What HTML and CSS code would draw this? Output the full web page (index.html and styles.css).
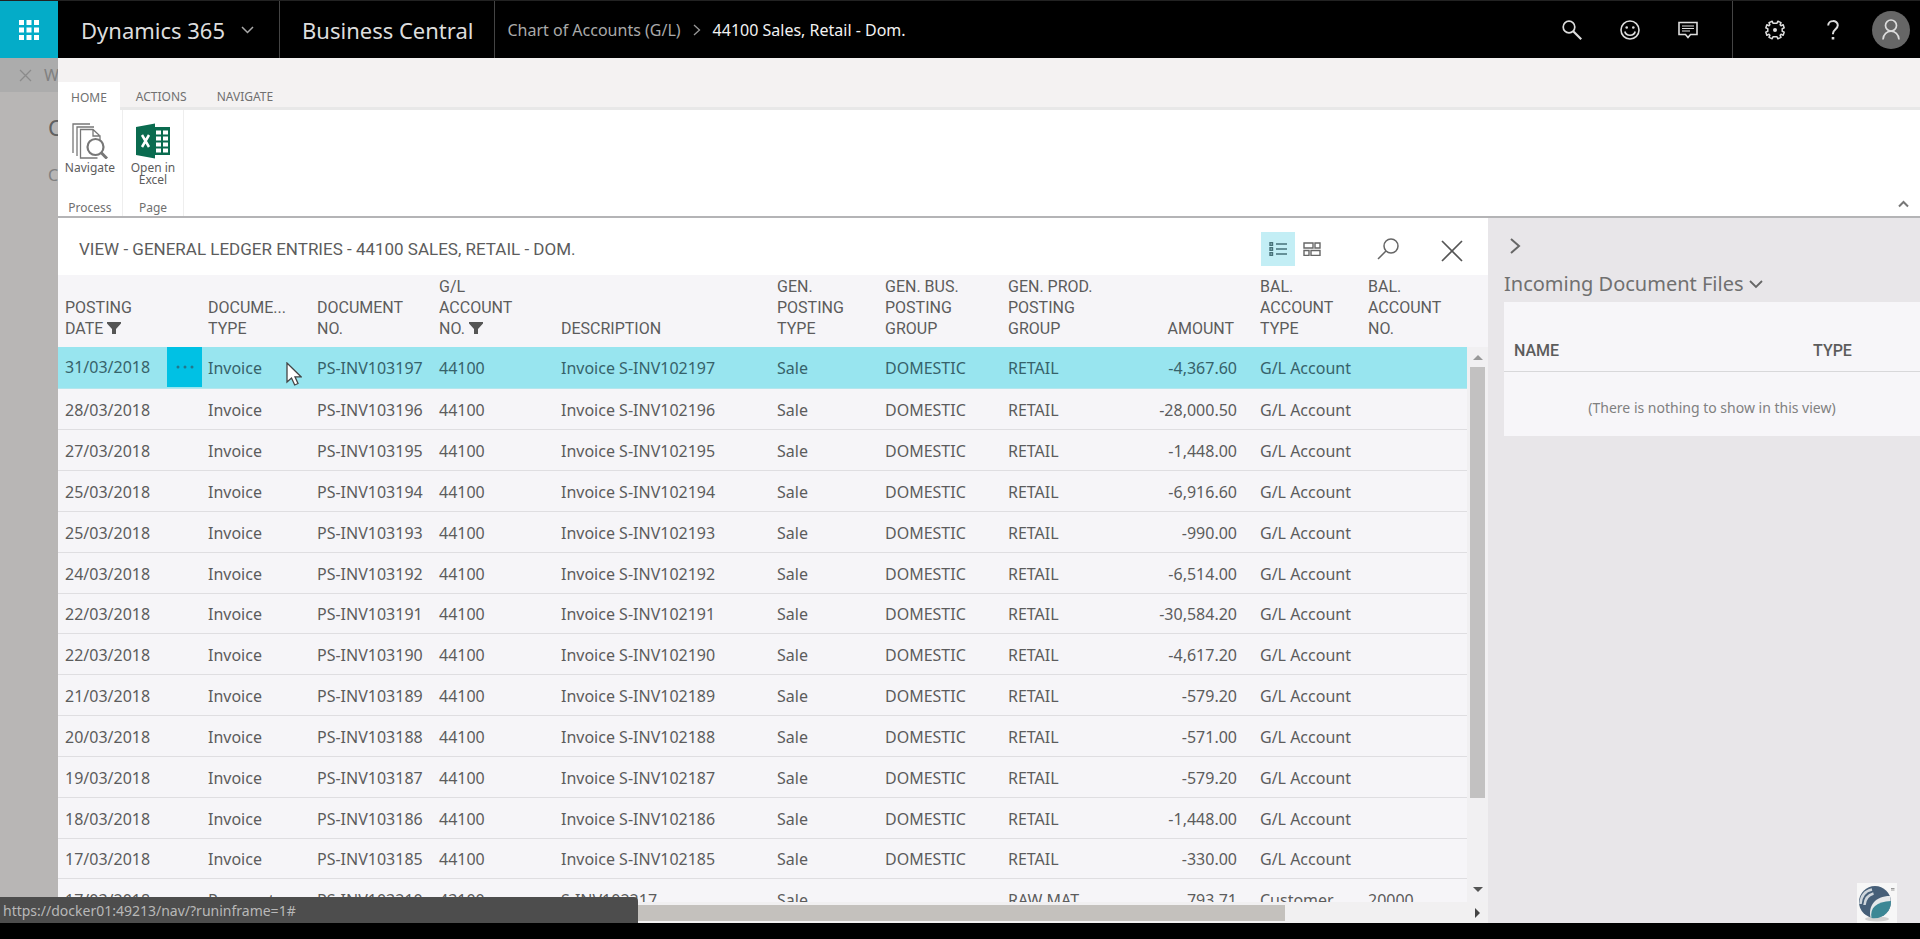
FILE: index.html
```html
<!DOCTYPE html>
<html lang="en">
<head>
<meta charset="utf-8">
<title>General Ledger Entries - Dynamics 365 Business Central</title>
<link rel="stylesheet" href="styles.css">
</head>
<body>
<header class="topbar">
  <button class="launcher" aria-label="App launcher">
    <svg width="20" height="20" viewBox="0 0 20 20" fill="#fff"><path d="M0 0h5v5H0zM7.500 0h5v5h-5zM15 0h5v5h-5zM0 7.500h5v5H0zM7.500 7.500h5v5h-5zM15 7.500h5v5h-5zM0 15h5v5H0zM7.500 15h5v5h-5zM15 15h5v5h-5z"/></svg>
  </button>
  <button class="suite">Dynamics 365
    <svg width="13" height="8" viewBox="0 0 13 8" fill="none" stroke="#aaa" stroke-width="1.500"><path d="M1 1l5.500 5.500L12 1"/></svg>
  </button>
  <a class="product" href="#">Business Central</a>
  <nav class="crumbs">
    <a href="#">Chart of Accounts (G/L)</a>
    <svg width="8" height="12" viewBox="0 0 8 12" fill="none" stroke="#999" stroke-width="1.300"><path d="M1 1l5.500 5L1 11"/></svg>
    <span class="current">44100 Sales, Retail - Dom.</span>
  </nav>
  <div class="tools">
    <button aria-label="Search"><svg width="20" height="20" viewBox="0 0 20 20" fill="none" stroke="#ddd" stroke-width="1.700"><circle cx="7" cy="7" r="5.800"/><path d="M11.200 11.200l8 8" stroke-width="2.200"/></svg></button>
    <button aria-label="Feedback"><svg width="20" height="20" viewBox="0 0 20 20" fill="none" stroke="#ddd" stroke-width="1.600"><circle cx="10" cy="10" r="9"/><path d="M4.800 11.500c1.200 5 9.200 5 10.400 0"/><circle cx="6.700" cy="7.500" r="1.300" fill="#ddd" stroke="none"/><circle cx="13.300" cy="7.500" r="1.300" fill="#ddd" stroke="none"/></svg></button>
    <button aria-label="Messages"><svg width="20" height="18" viewBox="0 0 20 18" fill="none" stroke="#ddd" stroke-width="1.600"><path d="M1 1.500h18v12h-6.500L10 16.500 7.500 13.500H1z"/><path d="M4 5h12M4 7.500h12M4 10h8" stroke-width="1.200"/></svg></button>
  </div>
  <div class="account">
    <button aria-label="Settings"><svg width="20" height="20" viewBox="0 0 20 20" fill="none" stroke="#ddd" stroke-width="1.500" stroke-linejoin="round"><path d="M8 3.300L7.200 1.200 4 2.600l.9 2.200-.9.900-2.200-.9-1 3.100 2 .9v2.400l-2 .9 1 3.100 2.200-.9.900.9-.9 2.200 3.200 1.400.8-2.100h4l.8 2.100 3.200-1.400-.9-2.200.9-.9 2.200.9 1-3.100-2-.9V8.800l2-.9-1-3.100-2.200.9-.9-.9.900-2.200-3.200-1.400L12 3.300z"/><circle cx="10" cy="10" r="2" fill="#ddd" stroke="none"/></svg></button>
    <button aria-label="Help"><svg width="12" height="20" viewBox="0 0 12 20" fill="none" stroke="#ddd" stroke-width="2"><path d="M1.200 5.500C1.200-.3 10.800-.3 10.800 5.300c0 3.700-4.800 4.200-4.800 8.200v.8"/><path d="M6 17v2.500" stroke-width="2.600"/></svg></button>
    <button aria-label="Account"><svg width="38" height="38" viewBox="0 0 38 38" fill="none" stroke="#ddd" stroke-width="1.700"><circle cx="19" cy="19" r="19" fill="#666" stroke="none"/><circle cx="19" cy="14.500" r="5.500"/><path d="M11 28.500c.5-11 15.500-11 16 0"/></svg></button>
  </div>
</header>

<div class="workspace">
  <aside class="underlay" aria-hidden="true">
    <div class="underlay-bar">
      <svg width="13" height="13" viewBox="0 0 13 13" stroke="#8b8b8b" stroke-width="1.300"><path d="M1 1l11 11M12 1L1 12"/></svg>
      <span>W</span>
    </div>
    <p class="underlay-title">C</p>
    <p class="underlay-sub">C</p>
  </aside>

  <main class="page">
    <nav class="tabs">
      <button class="tab active">HOME</button>
      <button class="tab">ACTIONS</button>
      <button class="tab">NAVIGATE</button>
    </nav>
    <section class="ribbon">
      <div class="group process">
        <button class="command">
          <svg width="36" height="36" viewBox="0 0 36 36" fill="none" stroke="#777" stroke-width="1.300"><path d="M18 1H1v29M22 4H5v29M27 13V12l-6-5.500H8.500v28.500h17M21 6.500V13h7V20"/><circle cx="23.500" cy="24" r="8" fill="#fff" stroke-width="2.200"/><path d="M29 29.500l6 6" stroke-width="3"/></svg>
          <span>Navigate</span>
        </button>
        <span class="group-name">Process</span>
      </div>
      <div class="group">
        <button class="command">
          <svg width="36" height="36" viewBox="0 0 36 36" fill="none"><path d="M18 4h17v28H18z" fill="#0a6b4f"/><path d="M21 7.500h5v4h-5zM28 7.500h5v4h-5zM21 13.500h5v4h-5zM28 13.500h5v4h-5zM21 19.500h5v4h-5zM28 19.500h5v4h-5zM21 25.500h5v4h-5zM28 25.500h5v4h-5z" fill="#fff"/><path d="M1 4L20 .5v35L1 32z" fill="#0a6b4f"/><path d="M7 12l7 12M14 12L7 24" stroke="#fff" stroke-width="2.500"/></svg>
          <span>Open in<br>Excel</span>
        </button>
        <span class="group-name">Page</span>
      </div>
      <button class="collapse" aria-label="Collapse ribbon"><svg width="11" height="8" viewBox="0 0 11 8" fill="none" stroke="#777" stroke-width="2"><path d="M1 6.500L5.500 2 10 6.500"/></svg></button>
    </section>

    <div class="content">
      <section class="list">
        <div class="list-head">
          <h1>VIEW - GENERAL LEDGER ENTRIES - 44100 SALES, RETAIL - DOM.</h1>
          <button class="view on" aria-label="List view"><svg width="18" height="14" viewBox="0 0 18 14" fill="none" stroke="#477279" stroke-width="1.400"><path d="M7 2h11M7 7h11M7 12h11"/><path d="M1 .8h2.500v2.500H1zM1 5.800h2.500v2.500H1zM1 10.800h2.500v2.500H1z"/></svg></button>
          <button class="view" aria-label="Tile view"><svg width="18" height="14" viewBox="0 0 18 14" fill="none" stroke="#666" stroke-width="1.400"><path d="M1 1h9v5H1zM12 1h5v5h-5zM1 8.500h5v5H1zM8 8.500h9v5H8z"/></svg></button>
          <button class="find" aria-label="Find"><svg width="22" height="22" viewBox="0 0 22 22" fill="none" stroke="#666" stroke-width="1.500"><circle cx="14" cy="8" r="7"/><path d="M9 13l-8 8"/></svg></button>
          <button class="close" aria-label="Close"><svg width="22" height="22" viewBox="0 0 22 22" stroke="#555" stroke-width="1.700"><path d="M1 1l20 20M21 1L1 21"/></svg></button>
        </div>
        <div class="grid">
          <div class="rows">
            <table>
              <colgroup><col class="c-date"><col class="c-type"><col class="c-no"><col class="c-no"><col class="c-desc"><col class="c-small"><col class="c-group"><col class="c-group"><col class="c-amount"><col class="c-small"><col class="c-last"></colgroup>
              <thead><tr>
                <th>POSTING<br>DATE<svg class="funnel" width="14" height="12" viewBox="0 0 14 12" fill="#555"><path d="M0 0h14v1.500L9 7v5H5V7L0 1.500z"/></svg></th>
                <th>DOCUME...<br>TYPE</th><th>DOCUMENT<br>NO.</th>
                <th>G/L<br>ACCOUNT<br>NO.<svg class="funnel" width="14" height="12" viewBox="0 0 14 12" fill="#555"><path d="M0 0h14v1.500L9 7v5H5V7L0 1.500z"/></svg></th>
                <th>DESCRIPTION</th><th>GEN.<br>POSTING<br>TYPE</th><th>GEN. BUS.<br>POSTING<br>GROUP</th><th>GEN. PROD.<br>POSTING<br>GROUP</th><th class="num">AMOUNT</th><th>BAL.<br>ACCOUNT<br>TYPE</th><th>BAL.<br>ACCOUNT<br>NO.</th>
              </tr></thead>
              <tbody>
                <tr class="selected"><td><div class="with-menu">31/03/2018<button class="more" aria-label="Row actions"><svg width="20" height="4" viewBox="0 0 20 4" fill="#21778c"><circle cx="3" cy="2" r="1.500"/><circle cx="10" cy="2" r="1.500"/><circle cx="17" cy="2" r="1.500"/></svg></button></div></td><td>Invoice</td><td>PS-INV103197</td><td>44100</td><td>Invoice S-INV102197</td><td>Sale</td><td>DOMESTIC</td><td>RETAIL</td><td class="num">-4,367.60</td><td>G/L Account</td><td></td></tr>
                <tr><td>28/03/2018</td><td>Invoice</td><td>PS-INV103196</td><td>44100</td><td>Invoice S-INV102196</td><td>Sale</td><td>DOMESTIC</td><td>RETAIL</td><td class="num">-28,000.50</td><td>G/L Account</td><td></td></tr>
                <tr><td>27/03/2018</td><td>Invoice</td><td>PS-INV103195</td><td>44100</td><td>Invoice S-INV102195</td><td>Sale</td><td>DOMESTIC</td><td>RETAIL</td><td class="num">-1,448.00</td><td>G/L Account</td><td></td></tr>
                <tr><td>25/03/2018</td><td>Invoice</td><td>PS-INV103194</td><td>44100</td><td>Invoice S-INV102194</td><td>Sale</td><td>DOMESTIC</td><td>RETAIL</td><td class="num">-6,916.60</td><td>G/L Account</td><td></td></tr>
                <tr><td>25/03/2018</td><td>Invoice</td><td>PS-INV103193</td><td>44100</td><td>Invoice S-INV102193</td><td>Sale</td><td>DOMESTIC</td><td>RETAIL</td><td class="num">-990.00</td><td>G/L Account</td><td></td></tr>
                <tr><td>24/03/2018</td><td>Invoice</td><td>PS-INV103192</td><td>44100</td><td>Invoice S-INV102192</td><td>Sale</td><td>DOMESTIC</td><td>RETAIL</td><td class="num">-6,514.00</td><td>G/L Account</td><td></td></tr>
                <tr><td>22/03/2018</td><td>Invoice</td><td>PS-INV103191</td><td>44100</td><td>Invoice S-INV102191</td><td>Sale</td><td>DOMESTIC</td><td>RETAIL</td><td class="num">-30,584.20</td><td>G/L Account</td><td></td></tr>
                <tr><td>22/03/2018</td><td>Invoice</td><td>PS-INV103190</td><td>44100</td><td>Invoice S-INV102190</td><td>Sale</td><td>DOMESTIC</td><td>RETAIL</td><td class="num">-4,617.20</td><td>G/L Account</td><td></td></tr>
                <tr><td>21/03/2018</td><td>Invoice</td><td>PS-INV103189</td><td>44100</td><td>Invoice S-INV102189</td><td>Sale</td><td>DOMESTIC</td><td>RETAIL</td><td class="num">-579.20</td><td>G/L Account</td><td></td></tr>
                <tr><td>20/03/2018</td><td>Invoice</td><td>PS-INV103188</td><td>44100</td><td>Invoice S-INV102188</td><td>Sale</td><td>DOMESTIC</td><td>RETAIL</td><td class="num">-571.00</td><td>G/L Account</td><td></td></tr>
                <tr><td>19/03/2018</td><td>Invoice</td><td>PS-INV103187</td><td>44100</td><td>Invoice S-INV102187</td><td>Sale</td><td>DOMESTIC</td><td>RETAIL</td><td class="num">-579.20</td><td>G/L Account</td><td></td></tr>
                <tr><td>18/03/2018</td><td>Invoice</td><td>PS-INV103186</td><td>44100</td><td>Invoice S-INV102186</td><td>Sale</td><td>DOMESTIC</td><td>RETAIL</td><td class="num">-1,448.00</td><td>G/L Account</td><td></td></tr>
                <tr><td>17/03/2018</td><td>Invoice</td><td>PS-INV103185</td><td>44100</td><td>Invoice S-INV102185</td><td>Sale</td><td>DOMESTIC</td><td>RETAIL</td><td class="num">-330.00</td><td>G/L Account</td><td></td></tr>
                <tr><td>17/03/2018</td><td>Payment</td><td>PS-INV103210</td><td>43100</td><td>S-INV102217</td><td>Sale</td><td></td><td>RAW MAT</td><td class="num">793.71</td><td>Customer</td><td>20000</td></tr>
              </tbody>
            </table>
          </div>
          <div class="vscroll">
            <svg width="10" height="6" viewBox="0 0 10 6" fill="#999"><path d="M0 6l5-5 5 5z"/></svg>
            <div class="track"><div class="vthumb"></div></div>
            <svg width="10" height="6" viewBox="0 0 10 6" fill="#555"><path d="M0 0l5 5 5-5z"/></svg>
          </div>
        </div>
        <div class="hscroll">
          <div class="hthumb"></div>
          <svg width="6" height="10" viewBox="0 0 6 10" fill="#444"><path d="M0 0l5 5-5 5z"/></svg>
        </div>
      </section>

      <aside class="facts">
        <button class="hide" aria-label="Hide pane"><svg width="11" height="16" viewBox="0 0 11 16" fill="none" stroke="#666" stroke-width="2"><path d="M1 1l8 7-8 7"/></svg></button>
        <button class="fact-title">Incoming Document Files<svg width="14" height="9" viewBox="0 0 14 9" fill="none" stroke="#666" stroke-width="1.800"><path d="M1 1l6 6 6-6"/></svg></button>
        <table class="files">
          <thead><tr><th>NAME</th><th class="f-type">TYPE</th></tr></thead>
          <tbody><tr><td colspan="2">(There is nothing to show in this view)</td></tr></tbody>
        </table>
      </aside>
    </div>
  </main>
</div>
<footer class="edge"></footer>

<div class="status">https://docker01:49213/nav/?runinframe=1#</div>
<svg class="watermark" width="40" height="40" viewBox="0 0 40 40"><path d="M0 0h40v40H0z" fill="#f7f7f7"/><ellipse cx="20" cy="36" rx="12" ry="2.500" fill="#d2d2d2"/><circle cx="18" cy="19" r="16" fill="#465f78"/><path d="M13.500 34.500C11 23 18 13 33 13c1 4 1 8-.5 12-4 8-11 12-19 9.500z" fill="#e6e8ea"/><path d="M14.500 35c-2-10 5-16.500 19.500-17 .5 10-8.500 19-19.500 17z" fill="#3c8795"/><path d="M3.500 21C4 13 8 8 15 6.500M7.500 22c.5-6 3.500-10 9-11.500" fill="none" stroke="#cfd6dc" stroke-width="2.500"/><path d="M34 5.500h3.500M34 7h3.500" stroke="#999"/></svg>
<svg class="pointer" width="16" height="24" viewBox="0 0 16 24"><path d="M1 1v19l4.500-4 3.200 7 3.300-1.500-3-6.700h6z" fill="#fff" stroke="#444" stroke-width="1.300"/></svg>
</body>
</html>
```
FILE: styles.css
```css
* { box-sizing: border-box; }

body {
  margin: 0;
  height: 100vh;
  display: flex;
  flex-direction: column;
  overflow: hidden;
  background: #000;
  color: #5c5c5c;
  font: 16px/22px "Noto Sans", "Open Sans", sans-serif;
}

button {
  margin: 0;
  padding: 0;
  border: 0;
  background: none;
  color: inherit;
  font: inherit;
}

a { color: inherit; text-decoration: none; }
svg { display: block; flex: none; }

/* Top bar */
.topbar {
  flex: none;
  display: flex;
  height: 58px;
  border-top: 1px solid #222;
  background: #000;
  color: #ddd;
  white-space: nowrap;
}
.launcher {
  display: grid;
  place-items: center;
  width: 58px;
  background: #04acc8;
}
.suite {
  display: flex;
  align-items: center;
  gap: 16px;
  padding: 0 25px 0 23px;
  font-size: 22px;
}
.product {
  display: flex;
  align-items: center;
  padding: 0 21px 0 22px;
  border: solid #444;
  border-width: 0 1px;
  font-size: 22px;
}
.crumbs {
  display: flex;
  align-items: center;
  gap: 12px;
  padding-left: 12px;
  color: #aaa;
}
.current { color: #f2f2f2; }
.tools, .account { display: flex; }
.tools { margin-left: auto; padding-right: 15px; }
.account { padding-left: 13px; border-left: 1px solid #444; }
.tools button, .account button {
  display: grid;
  place-items: center;
  width: 58px;
}

/* Dimmed page behind the dialog */
.workspace { flex: 1; display: flex; min-height: 0; }
.underlay {
  flex: none;
  width: 58px;
  overflow: hidden;
  background: #b8b6b5;
  color: #808080;
}
.underlay-bar {
  display: flex;
  align-items: center;
  gap: 12px;
  height: 34px;
  padding-left: 19px;
  background: #acacac;
}
.underlay p { margin: 0; padding-left: 48px; }
.underlay .underlay-title { padding-top: 24px; font-size: 22px; color: #606060; }
.underlay .underlay-sub { padding-top: 26px; }

/* Ribbon */
.page {
  flex: 1;
  display: flex;
  flex-direction: column;
  min-width: 0;
  background: #fff;
}
.tabs {
  flex: none;
  display: flex;
  align-items: flex-end;
  height: 52px;
  border-bottom: 3px solid #e8e8e8;
  background: #f4f2f2;
  font-size: 12px;
  color: #707070;
}
.tab { height: 25px; padding: 4px 14px 0 16px; }
.tab.active { height: 28px; margin-bottom: -3px; padding: 4px 13px 0; background: #fff; }
.ribbon {
  flex: none;
  display: flex;
  height: 108px;
  border-bottom: 2px solid #b4b4b6;
  font-size: 12px;
  line-height: 12px;
}
.group {
  display: flex;
  flex-direction: column;
  align-items: center;
  justify-content: space-between;
  width: 61px;
  padding: 13px 0 1px;
  border-right: 1px solid #eee;
}
.process { width: 65px; }
.command { display: flex; flex-direction: column; align-items: center; gap: 3px; }
.group-name { line-height: 14px; color: #707070; }
.collapse { align-self: flex-end; margin: 0 11px 8px auto; }

/* List */
.content { flex: 1; display: flex; min-height: 0; }
.list { flex: 1; display: flex; flex-direction: column; min-width: 0; }
.list-head {
  flex: none;
  display: flex;
  align-items: center;
  height: 57px;
  padding: 4px 25px 0 21px;
}
.list-head h1 {
  flex: 1;
  margin: 0;
  font: 17px/22px Roboto, sans-serif;
  white-space: nowrap;
}
.view {
  display: grid;
  place-items: center;
  width: 34px;
  height: 34px;
}
.view.on { background: #c3eef5; }
.find { margin: 0 42px 0 48px; }
.close { margin-top: 4px; }

.grid { flex: 1; display: flex; min-height: 0; background: #f6f5f8; }
.rows { flex: 1; min-width: 0; overflow: hidden; }
.rows table { width: 100%; border-collapse: collapse; table-layout: fixed; white-space: nowrap; }
.c-date { width: 142px; }
.c-type { width: 109px; }
.c-no { width: 122px; }
.c-desc { width: 216px; }
.c-small { width: 108px; }
.c-group { width: 123px; }
.c-amount { width: 129px; }
.c-last { width: 107px; }
.rows th {
  height: 72px;
  padding: 0 0 8px 8px;
  font: 16px/21px Roboto, sans-serif;
  text-align: left;
  vertical-align: bottom;
}
.rows td {
  height: 41px;
  padding: 2px 0 0 8px;
  border-bottom: 1px solid #dfdee1;
}
.rows tbody tr:nth-child(6n+7) td { height: 40px; }
.rows .num { padding-right: 15px; text-align: right; }
.rows th.num { padding-right: 18px; }
.rows th:first-child, .rows td:first-child { padding-left: 7px; }
.funnel { display: inline-block; margin-left: 4px; }
.selected { background: #98e5ef; color: #36626a; }
.rows .selected td { border-bottom-color: #b4e6ed; }
.rows .selected td:first-child { padding-top: 0; }
.with-menu { display: flex; align-items: center; justify-content: space-between; line-height: 24px; }
.more {
  display: grid;
  place-items: center;
  width: 35px;
  height: 40px;
  margin-right: -2px;
  background: #00c1e4;
}

/* Scroll bars */
.vscroll {
  display: flex;
  flex-direction: column;
  align-items: center;
  gap: 7px;
  width: 21px;
  margin-top: 72px;
  padding: 7px 0 9px;
  background: #f1f0f2;
}
.track { flex: 1; width: 15px; }
.vthumb { height: 84%; background: #c2c1c1; }
.hscroll {
  flex: none;
  display: flex;
  align-items: center;
  justify-content: space-between;
  height: 21px;
  padding: 0 7px 0 20px;
  background: #f1f0f1;
}
.hthumb { width: 86%; height: 16px; background: #c4c1bd; }

/* Fact box pane */
.facts {
  flex: none;
  display: flex;
  flex-direction: column;
  align-items: flex-start;
  width: 432px;
  padding: 20px 0 0 16px;
  background: #e8e6e9;
}
.hide { padding-left: 6px; }
.fact-title {
  display: flex;
  align-items: center;
  gap: 5px;
  margin: 16px 0 4px;
  font-size: 20px;
  line-height: 28px;
  color: #707070;
}
.files {
  width: 100%;
  border-collapse: collapse;
  background: #f7f6f9;
}
.files th {
  height: 69px;
  padding: 30px 10px 0;
  border-bottom: 1px solid #d8d8da;
  font: 500 16px/22px Roboto, sans-serif;
  text-align: left;
}
.files .f-type { width: 117px; }
.files td {
  height: 65px;
  padding: 8px 0 0;
  font-size: 14px;
  text-align: center;
  color: #808080;
}

.edge { flex: none; height: 16px; background: #000; }

/* Overlays */
.status {
  position: absolute;
  left: 0;
  bottom: 16px;
  width: 638px;
  height: 26px;
  padding: 3px 3px 0;
  border-top-right-radius: 4px;
  background: #4d4d4d;
  color: #b8b8b8;
  font-size: 14px;
}
.watermark { position: absolute; right: 23px; bottom: 16px; }
.pointer { position: absolute; left: 286px; top: 362px; }
```
